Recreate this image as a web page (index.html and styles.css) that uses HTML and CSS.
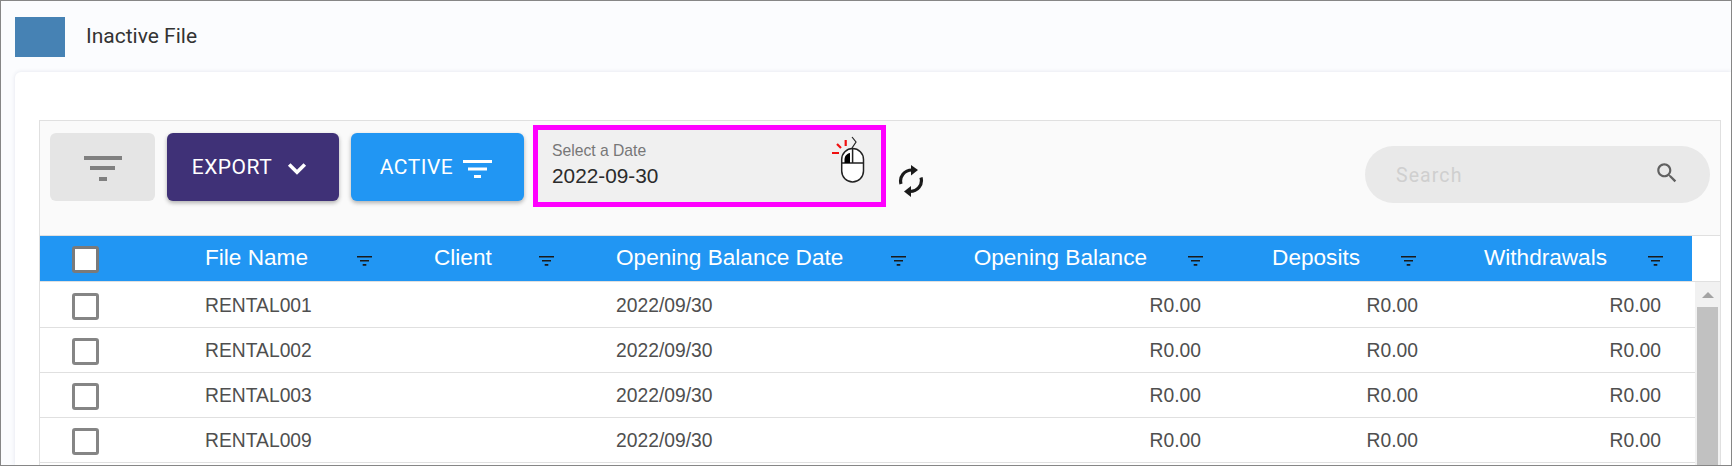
FILE: index.html
```html
<!DOCTYPE html>
<html lang="en">
<head>
<meta charset="utf-8">
<title>Inactive File</title>
<link rel="stylesheet" href="styles.css">
</head>
<body>
<div class="frame">
  <header class="topbar">
    <div class="logo"></div>
    <div class="title">Inactive File</div>
  </header>
  <main class="card">
    <section class="panel">
      <div class="toolbar">
        <button class="btn btn-filter" type="button">
          <svg class="ico-low" width="38" height="25" viewBox="0 0 38 25"><rect width="38" height="4" fill="#808080"/><rect x="6" y="10" width="25" height="4" fill="#808080"/><rect x="15" y="21" width="8" height="4" fill="#808080"/></svg>
        </button>
        <button class="btn btn-export" type="button">
          <span>EXPORT</span>
          <svg class="chev" width="20" height="13" viewBox="0 0 20 13"><path d="M2.2 2.4l7.8 7.8 7.8-7.8" fill="none" stroke="#fff" stroke-width="3.6"/></svg>
        </button>
        <button class="btn btn-active" type="button">
          <span>ACTIVE</span>
          <svg class="ico-low" width="29" height="18" viewBox="0 0 29 18"><rect width="29" height="3" fill="#fff"/><rect x="5" y="7.5" width="19" height="3" fill="#fff"/><rect x="11" y="15" width="7" height="3" fill="#fff"/></svg>
        </button>
        <div class="datebox">
          <div class="datefield">
            <div class="datelabel">Select a Date</div>
            <div class="datevalue">2022-09-30</div>
          </div>
          <svg class="mouse" width="40" height="50" viewBox="0 0 40 50">
            <path d="M22 2l4 5-4 6" fill="none" stroke="#222" stroke-width="1.2"/>
            <path d="M2 18h7M7 9l4 4M15.7 5v6" fill="none" stroke="#f01010" stroke-width="2.2"/>
            <rect x="11.7" y="13.5" width="21.8" height="33.5" rx="10.9" fill="#fff" stroke="#222" stroke-width="1.5"/>
            <path d="M11.7 28h21.8M22.6 13.5V28" fill="none" stroke="#222" stroke-width="1.5"/>
            <path d="M20 18v10h-5.5v-3.5c0-3.3 2.3-6 5.5-6.5z" fill="#000"/>
          </svg>
        </div>
        <svg class="refresh" width="26" height="32" viewBox="0 0 26 32">
          <path d="M3 19C1 11.500 6.500 5 14 5" fill="none" stroke="#1a1a1a" stroke-width="3.200"/>
          <path d="M13 0L20 5 13 10.500z" fill="#1a1a1a"/>
          <path d="M23 12.500C25 20 19.500 26.500 12 26.500" fill="none" stroke="#1a1a1a" stroke-width="3.200"/>
          <path d="M13 21L6 26.500 13 32z" fill="#1a1a1a"/>
        </svg>
        <div class="search">
          <span class="search-text">Search</span>
          <svg width="26" height="26" viewBox="0 0 24 24"><path fill="#616161" d="M15.5 14h-.79l-.28-.27C15.41 12.59 16 11.11 16 9.5 16 5.91 13.09 3 9.5 3S3 5.91 3 9.5 5.91 16 9.5 16c1.61 0 3.09-.59 4.23-1.57l.27.28v.79l5 4.99L20.49 19l-4.99-5zm-6 0C7.01 14 5 11.99 5 9.5S7.01 5 9.5 5 14 7.01 14 9.5 11.99 14 9.5 14z"/></svg>
        </div>
      </div>

      <div class="thead-wrap">
        <div class="grid thead">
          <div class="cell"><span class="check check-head"></span></div>
          <div class="cell th c1"><span>File Name</span><svg class="f" width="15" height="10" viewBox="0 0 15 10"><path d="M0 .8h15M3 4.8h9M5.7 8.9h3.6" stroke="#1a1a1a" stroke-width="1.6"/></svg></div>
          <div class="cell th c2"><span>Client</span><svg class="f" width="15" height="10" viewBox="0 0 15 10"><path d="M0 .8h15M3 4.8h9M5.7 8.9h3.6" stroke="#1a1a1a" stroke-width="1.6"/></svg></div>
          <div class="cell th c3"><span>Opening Balance Date</span><svg class="f" width="15" height="10" viewBox="0 0 15 10"><path d="M0 .8h15M3 4.8h9M5.7 8.9h3.6" stroke="#1a1a1a" stroke-width="1.6"/></svg></div>
          <div class="cell th num c4"><span>Opening Balance</span><svg class="f" width="15" height="10" viewBox="0 0 15 10"><path d="M0 .8h15M3 4.8h9M5.7 8.9h3.6" stroke="#1a1a1a" stroke-width="1.6"/></svg></div>
          <div class="cell th num c5"><span>Deposits</span><svg class="f" width="15" height="10" viewBox="0 0 15 10"><path d="M0 .8h15M3 4.8h9M5.7 8.9h3.6" stroke="#1a1a1a" stroke-width="1.6"/></svg></div>
          <div class="cell th num c6"><span>Withdrawals</span><svg class="f" width="15" height="10" viewBox="0 0 15 10"><path d="M0 .8h15M3 4.8h9M5.7 8.9h3.6" stroke="#1a1a1a" stroke-width="1.6"/></svg></div>
        </div>
      </div>

      <div class="tbody-wrap">
        <div class="rows">
          <div class="grid row">
            <div class="cell"><span class="check"></span></div>
            <div class="cell td">RENTAL001</div><div class="cell td"></div><div class="cell td">2022/09/30</div>
            <div class="cell td v4">R0.00</div><div class="cell td v5">R0.00</div><div class="cell td v6">R0.00</div>
          </div>
          <div class="grid row">
            <div class="cell"><span class="check"></span></div>
            <div class="cell td">RENTAL002</div><div class="cell td"></div><div class="cell td">2022/09/30</div>
            <div class="cell td v4">R0.00</div><div class="cell td v5">R0.00</div><div class="cell td v6">R0.00</div>
          </div>
          <div class="grid row">
            <div class="cell"><span class="check"></span></div>
            <div class="cell td">RENTAL003</div><div class="cell td"></div><div class="cell td">2022/09/30</div>
            <div class="cell td v4">R0.00</div><div class="cell td v5">R0.00</div><div class="cell td v6">R0.00</div>
          </div>
          <div class="grid row">
            <div class="cell"><span class="check"></span></div>
            <div class="cell td">RENTAL009</div><div class="cell td"></div><div class="cell td">2022/09/30</div>
            <div class="cell td v4">R0.00</div><div class="cell td v5">R0.00</div><div class="cell td v6">R0.00</div>
          </div>
        </div>
        <div class="scrollbar">
          <div class="scroll-up"><span class="tri"></span></div>
          <div class="scroll-thumb"></div>
        </div>
      </div>
    </section>
  </main>
</div>
</body>
</html>
```
FILE: styles.css
```css
* { box-sizing: border-box; }
html, body { margin: 0; padding: 0; }
body { width: 1732px; height: 466px; overflow: hidden; font-family: "Liberation Sans", Arial, sans-serif; }

.frame {
  width: 1732px; height: 466px; overflow: hidden;
  border: 1px solid #868686;
  background: #fbfcfe;
  display: flex; flex-direction: column;
}

.topbar { height: 71px; flex: none; display: flex; align-items: flex-start; padding: 16px 0 0 14px; }
.logo { width: 50px; height: 40px; background: #4682b4; }
.title { margin-left: 21px; padding-top: 1px; font: 400 21px/36px Roboto, sans-serif; color: #333; }

.card {
  flex: 1; min-height: 0;
  margin-left: 14px;
  background: #fff;
  border-radius: 6px 0 0 0;
  box-shadow: 0 0 4px rgba(40, 60, 110, .12);
  padding: 48px 10px 0 24px;
}

.panel { width: 1682px; border: 1px solid #e0e0e0; border-bottom: 0; background: #fff; }

.toolbar { height: 115px; display: flex; align-items: flex-start; padding-left: 10px; background: #fafafa; border-bottom: 1px solid #e0e0e0; }

.btn {
  height: 68px; margin-top: 12px; border: 0; border-radius: 6px; padding: 0;
  display: flex; align-items: center; justify-content: center;
  font: 400 21px Roboto, sans-serif; color: #fff; letter-spacing: .5px;
}
.btn-filter { width: 105px; background: #e5e5e5; }
.btn-export { width: 172px; margin-left: 12px; background: #3f3177; box-shadow: 0 2px 4px rgba(0,0,0,.3); gap: 15px; padding-right: 7px; }
.btn-active { width: 173px; margin-left: 12px; background: #2196f3; box-shadow: 0 2px 4px rgba(0,0,0,.3); gap: 10px; padding-right: 3px; }
.chev { margin-top: 3px; }
.ico-low { margin-top: 3px; }

.datebox {
  width: 353px; height: 82px; margin: 4px 0 0 9px;
  border: 5px solid #ff00ff; background: #f0f0f0;
  display: flex; align-items: flex-start; justify-content: space-between;
  padding: 0 11px 0 14px;
}
.datefield { padding-top: 11px; }
.datelabel { font-size: 15.7px; line-height: 20px; color: #777; }
.datevalue { font-size: 20.8px; line-height: 26px; margin-top: 2px; color: #2b2b2b; }
.mouse { margin-top: 5px; }

.refresh { margin: 44px 0 0 12px; flex: none; }

.search {
  width: 345px; height: 57px; margin: 25px 10px 0 auto;
  border-radius: 29px; background: #e9e9e9;
  display: flex; align-items: center; justify-content: space-between;
  padding: 0 30px 0 31px;
}
.search-text { font: 400 19.5px Roboto, sans-serif; color: #cfcfcf; letter-spacing: 1.1px; padding-top: 2px; }
.search svg { margin-top: -4px; }

.thead-wrap { height: 46px; border-bottom: 1px solid #e0e0e0; background: #fff; }

.grid { display: grid; grid-template-columns: 145px 229px 182px 352px 295px 215px 234px; }
.thead { width: 1652px; height: 45px; background: #2196f3; color: #fff; font-size: 22.6px; }
.cell { display: flex; align-items: center; min-width: 0; }
.cell:first-child { padding: 2px 0 0 32px; }
.th { padding: 0 42px 2px 20px; justify-content: space-between; }
.th .f { margin-top: 7px; flex: none; }
.num { justify-content: flex-end; }
.num .f { margin-left: 41px; }
.c4 { padding-right: 40px; }
.c6 { padding-right: 29px; }

.tbody-wrap { display: flex; height: 184px; }
.rows { width: 1655px; flex: none; padding-top: 1px; }
.row { height: 45px; border-bottom: 1px solid #e0e0e0; color: #4f4f4f; font-size: 19.3px; }
.td { padding: 2px 0 0 20px; }
.v4, .v5, .v6 { justify-content: flex-end; }
.v4 { padding-right: 42px; }
.v5 { padding-right: 40px; }
.v6 { padding-right: 31px; }

.check { width: 27px; height: 27px; border: 3px solid #858585; border-radius: 3px; background: #fff; display: block; }
.check-head { border-color: #7a7a7a; }

.scrollbar { width: 25px; flex: none; background: #f1f1f1; padding: 0 2px; }
.scroll-up { height: 25px; display: flex; justify-content: center; padding-top: 10px; }
.tri { width: 0; height: 0; border-left: 6px solid transparent; border-right: 6px solid transparent; border-bottom: 6px solid #a3a3a3; }
.scroll-thumb { height: 160px; background: #c1c1c1; }
```
